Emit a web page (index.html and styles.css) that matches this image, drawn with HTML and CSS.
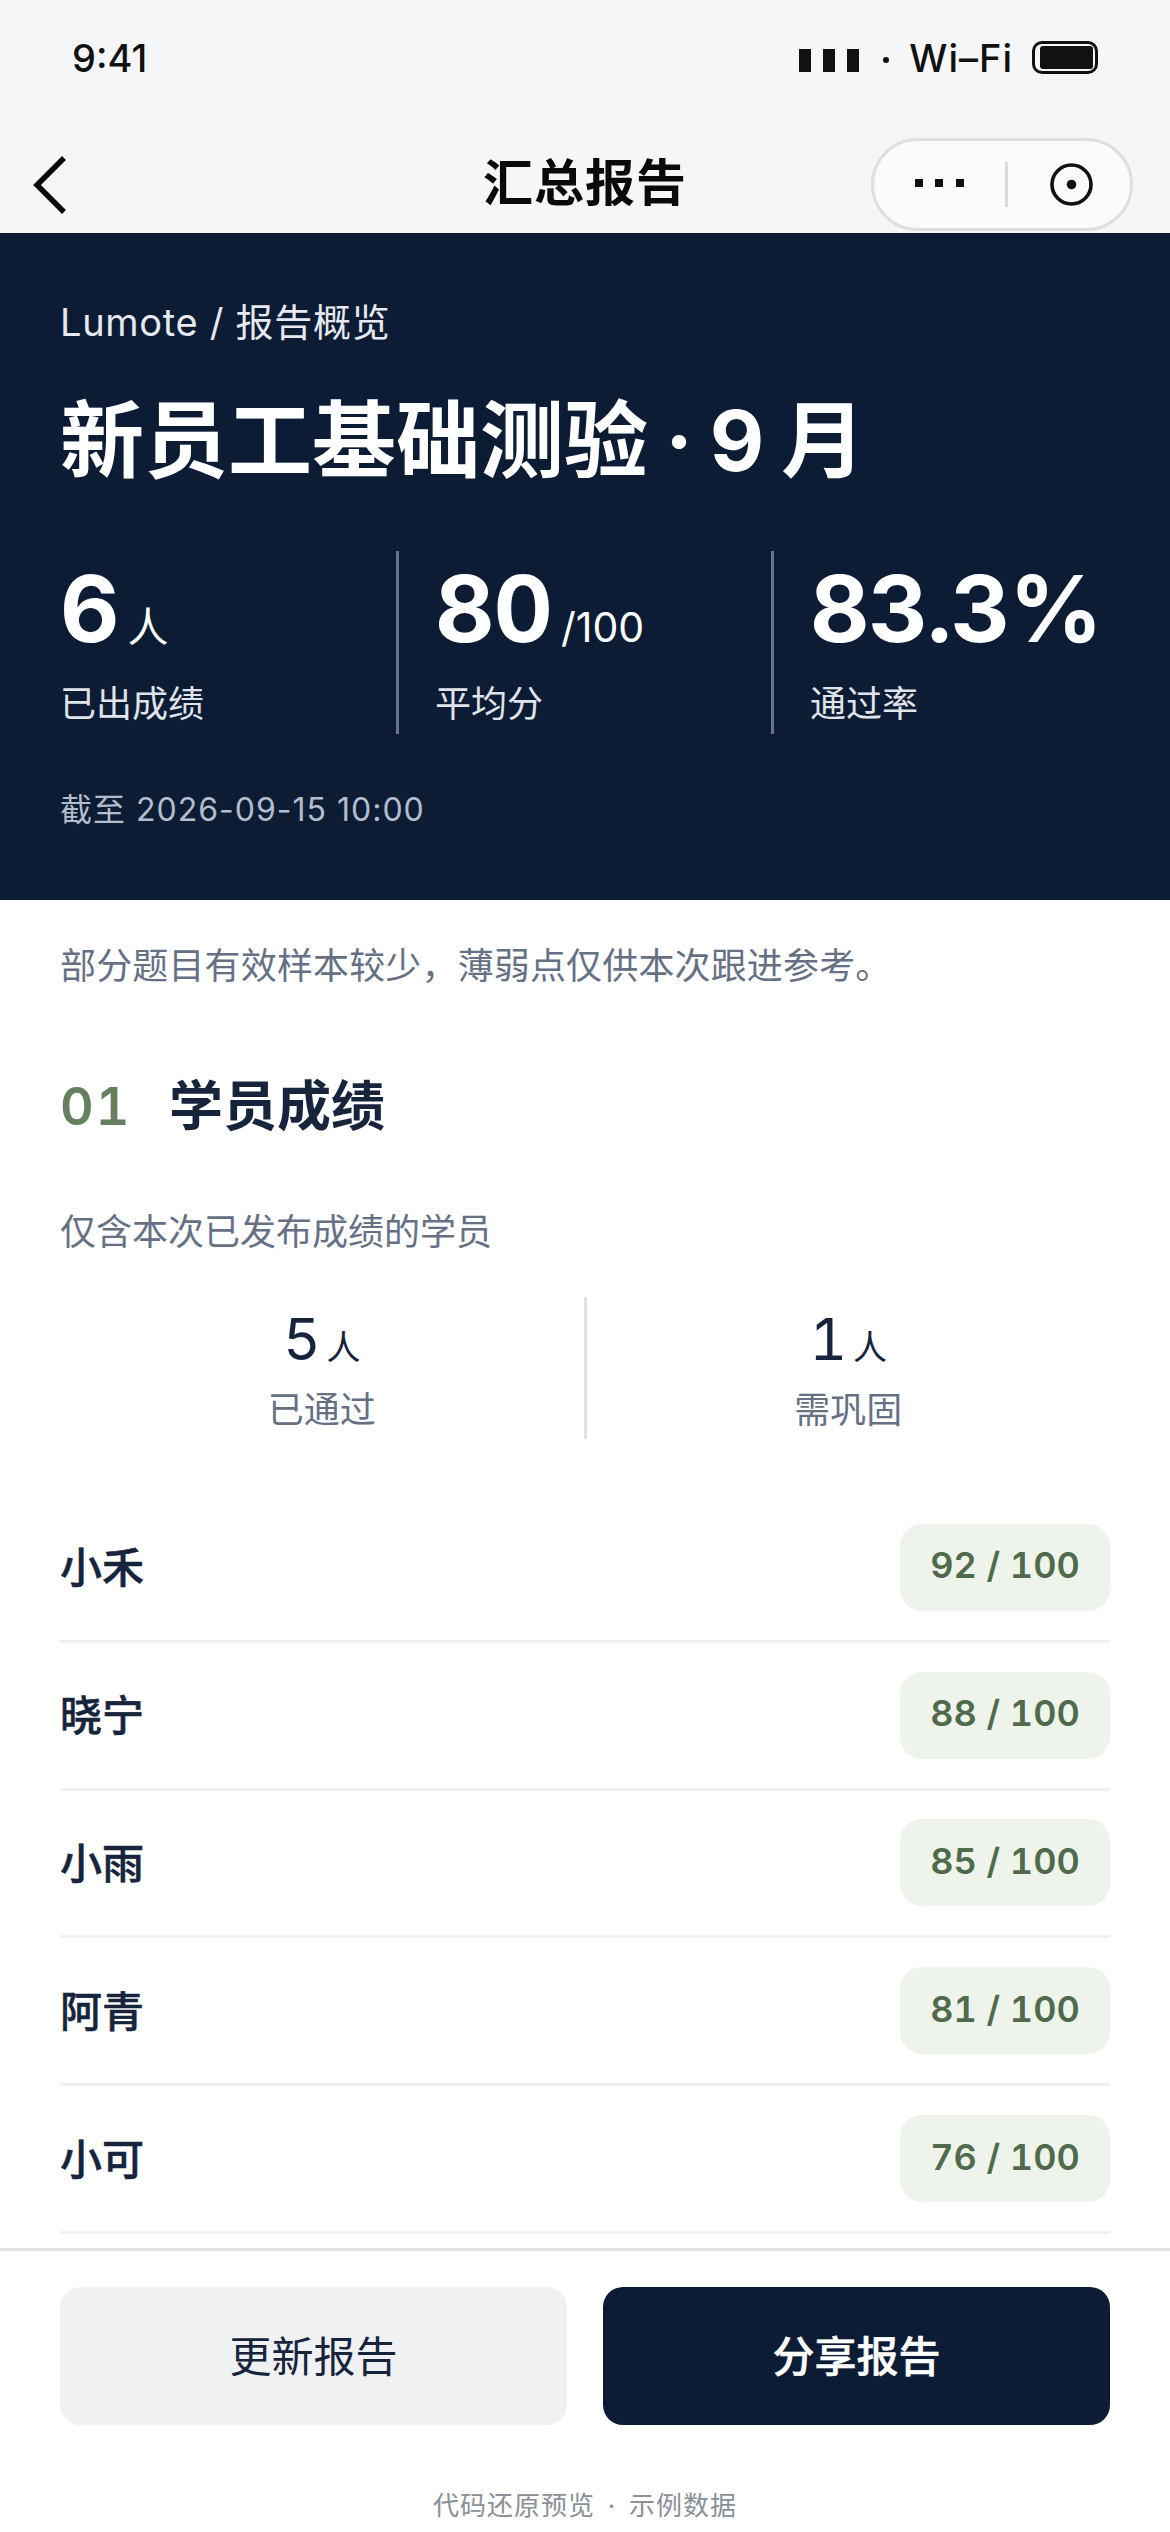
FILE: index.html
```html
<!DOCTYPE html>
<html lang="zh-CN">
<head>
<meta charset="utf-8">
<title>汇总报告</title>
<link rel="stylesheet" href="styles.css">
</head>
<body>
<div class="page">
  <header class="chrome">
    <div class="status">
      <span class="time">9:41</span>
      <div class="status-right">
        <span class="signal"><i></i><i></i><i></i></span>
        <span class="sep"></span>
        <span class="wifi">Wi–Fi</span>
        <span class="battery"><b></b></span>
      </div>
    </div>
    <nav class="nav">
      <svg class="back" width="36" height="58" viewBox="0 0 36 58"><path d="M32 2 L5 29 L32 56" fill="none" stroke="#0a0a0a" stroke-width="5.5"/></svg>
      <h1 class="nav-title">汇总报告</h1>
      <div class="capsule">
        <svg class="dots" width="49" height="8" viewBox="0 0 49 8"><rect x="0" y="0" width="8" height="8" fill="#111"/><rect x="20" y="0" width="8" height="8" fill="#111"/><rect x="41" y="0" width="8" height="8" fill="#111"/></svg>
        <span class="capsule-line"></span>
        <svg class="target" width="43" height="43" viewBox="0 0 43 43"><circle cx="21.5" cy="21.5" r="19.5" fill="none" stroke="#111" stroke-width="3.6"/><circle cx="21.5" cy="21.5" r="4.8" fill="#111"/></svg>
      </div>
    </nav>
  </header>

  <section class="hero">
    <p class="eyebrow">Lumote / 报告概览</p>
    <h2 class="hero-title">新员工基础测验 · 9 月</h2>
    <div class="stats">
      <div class="stat"><div class="stat-value">6<span class="stat-unit">人</span></div><div class="stat-label">已出成绩</div></div>
      <div class="stat"><div class="stat-value">80<span class="stat-unit">/100</span></div><div class="stat-label">平均分</div></div>
      <div class="stat"><div class="stat-value">83.3%</div><div class="stat-label">通过率</div></div>
    </div>
    <p class="deadline">截至 2026-09-15 10:00</p>
  </section>

  <main class="content">
    <p class="note">部分题目有效样本较少，薄弱点仅供本次跟进参考。</p>
    <div class="section-head"><span class="section-no">01</span><h3 class="section-title">学员成绩</h3></div>
    <p class="section-sub">仅含本次已发布成绩的学员</p>
    <div class="split">
      <div class="split-item"><div class="split-value">5<span class="split-unit">人</span></div><div class="split-label">已通过</div></div>
      <div class="split-item"><div class="split-value">1<span class="split-unit">人</span></div><div class="split-label">需巩固</div></div>
    </div>
    <ul class="rows">
      <li class="row"><span class="name">小禾</span><span class="score">92 / 100</span></li>
      <li class="row"><span class="name">晓宁</span><span class="score">88 / 100</span></li>
      <li class="row"><span class="name">小雨</span><span class="score">85 / 100</span></li>
      <li class="row"><span class="name">阿青</span><span class="score">81 / 100</span></li>
      <li class="row"><span class="name">小可</span><span class="score">76 / 100</span></li>
    </ul>
  </main>

  <footer class="footer">
    <div class="actions">
      <button class="btn btn-light">更新报告</button>
      <button class="btn btn-dark">分享报告</button>
    </div>
    <p class="caption">代码还原预览 · 示例数据</p>
  </footer>
</div>
</body>
</html>
```

FILE: styles.css
```css
* { box-sizing: border-box; margin: 0; padding: 0; }
html, body { width: 1170px; height: 2532px; overflow: hidden; background: #fff; }
body { font-family: Inter, "Noto Sans CJK SC", sans-serif; color: #16243c; }
.page { width: 1170px; height: 2532px; display: flex; flex-direction: column; overflow: hidden; }

.chrome { height: 233px; background: #f5f6f8; flex: none; display: flex; flex-direction: column; }
.status { height: 118px; padding: 35px 72px 0 72px; display: flex; justify-content: space-between; align-items: flex-start; color: #111; }
.time { font-size: 38px; line-height: 46px; font-weight: 500; }
.status-right { display: flex; align-items: center; height: 46px; }
.signal { display: flex; gap: 12px; margin-top: 4px; }
.signal i { display: block; width: 12px; height: 23px; background: #111; }
.sep { width: 6px; height: 6px; border-radius: 50%; background: #111; margin: 4px 0 0 24px; }
.wifi { font-size: 38px; line-height: 46px; font-weight: 500; letter-spacing: 1px; margin-left: 20px; }
.battery { width: 66px; height: 33px; border: 3px solid #111; border-radius: 10px; padding: 2px 2px 2px 5px; margin-left: 19px; display: block; margin-top: -2px; }
.battery b { display: block; width: 100%; height: 100%; background: #111; border-radius: 3px; }

.nav { position: relative; height: 115px; display: flex; align-items: center; justify-content: center; }
.back { position: absolute; left: 32px; top: 38px; }
.nav-title { font-size: 50px; letter-spacing: 1px; font-weight: 600; color: #0a0a0a; line-height: 70px; margin-top: 14px; }
.capsule { position: absolute; left: 871px; top: 20px; width: 262px; height: 93px; border: 3px solid #dedfe0; border-radius: 47px; background: #fbfbfb; display: flex; align-items: center; padding-left: 41px; }
.dots { flex: none; margin-top: -3px; }
.capsule-line { width: 3px; height: 45px; background: #d9dadb; margin-left: 41px; }
.target { margin-left: 42px; flex: none; }

.hero { height: 667px; background: #0c1c35; padding: 61px 60px 0; color: #fff; flex: none; }
.eyebrow { font-size: 38px; line-height: 56px; letter-spacing: 0.7px; color: #e6e9ef; }
.hero-title { font-size: 84px; line-height: 120px; font-weight: 700; margin-top: 31px; white-space: nowrap; word-spacing: -3px; }
.stats { display: flex; margin: 50px -39px 0; }
.stat { width: 375px; height: 183px; padding: 0 0 0 36px; border-left: 3px solid #66738a; flex: none; }
.stat:first-child { border-left: 0; padding-left: 39px; }
.stat-value { font-size: 92px; line-height: 114px; height: 114px; padding-top: 1px; font-weight: 700; white-space: nowrap; letter-spacing: -1px; font-variant-numeric: tabular-nums; }
.stat-unit { font-size: 41px; line-height: 1; font-weight: 400; margin-left: 9px; letter-spacing: 0; font-variant-numeric: normal; }
.stat-label { font-size: 36px; line-height: 50px; color: #e0e4ea; margin-top: 14px; }
.deadline { font-size: 32px; line-height: 48px; letter-spacing: 1px; color: #b4bdcc; margin-top: 52px; }

.content { flex: 1; min-height: 0; overflow: hidden; padding: 39px 60px 0; }
.note { font-size: 36px; line-height: 54px; letter-spacing: 0.15px; color: #667085; }
.section-head { display: flex; align-items: center; margin-top: 76px; }
.section-no { font-size: 52px; line-height: 76px; font-weight: 600; color: #64805f; width: 109px; letter-spacing: 2px; font-variant-numeric: tabular-nums; }
.section-title { font-size: 54px; line-height: 76px; font-weight: 600; color: #16243c; }
.section-sub { font-size: 36px; line-height: 54px; color: #667085; margin-top: 60px; }
.split { display: flex; margin-top: 38px; font-variant-numeric: tabular-nums; }
.split-item { flex: 1; height: 142px; padding-top: 4px; text-align: center; border-left: 3px solid #dfe2e6; }
.split-item:first-child { border-left: 0; }
.split-value { font-size: 58px; line-height: 76px; height: 76px; color: #16243c; }
.split-unit { font-size: 34px; line-height: 1; margin-left: 6px; }
.split-label { font-size: 36px; line-height: 50px; color: #667085; margin-top: 8px; }

.rows { list-style: none; margin-top: 56px; }
.row { display: flex; justify-content: space-between; align-items: center; height: 147.8px; border-bottom: 3px solid #f0f0f1; }
.name { font-size: 42px; font-weight: 500; -webkit-text-stroke: 0.5px #16243c; color: #16243c; margin-top: -5px; }
.score { width: 210px; height: 87px; padding-bottom: 4px; background: #eef3ec; border-radius: 22px; color: #4f6b4c; font-size: 36px; font-weight: 600; letter-spacing: 0; display: flex; align-items: center; justify-content: center; font-variant-numeric: tabular-nums; }

.footer { height: 284px; flex: none; border-top: 3px solid #e0e3e7; background: #fff; padding: 36px 60px 0; }
.actions { display: flex; gap: 36px; }
.btn { flex: 1; height: 138px; padding-bottom: 6px; border: 0; border-radius: 20px; font: inherit; font-size: 42px; }
.btn-light { background: #f0f1f3; color: #16243c; }
.btn-dark { background: #0c1c35; color: #fff; font-weight: 500; -webkit-text-stroke: 0.5px #fff; }
.caption { text-align: center; font-size: 26px; line-height: 40px; letter-spacing: 1px; word-spacing: 4.5px; color: #8a8f98; margin-top: 61px; }
```
